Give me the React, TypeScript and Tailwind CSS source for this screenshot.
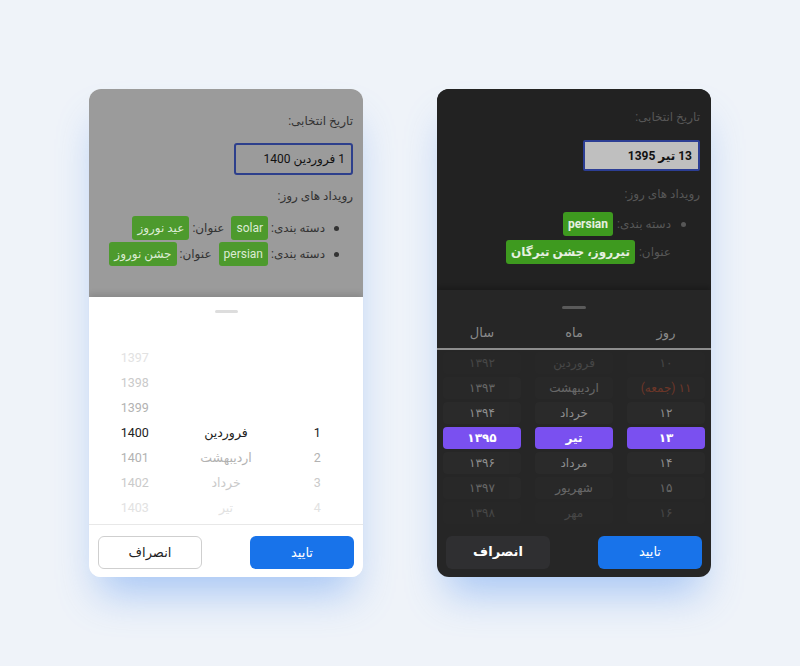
import type { ReactNode } from 'react';

const font = { fontFamily: 'Roboto, "DejaVu Sans", sans-serif' };

function Badge({ children, dark }: { children: ReactNode; dark?: boolean }) {
  return (
    <span
      className={
        'inline-flex h-[24px] items-center whitespace-nowrap rounded-[3px] px-[5px] text-[12px] ' +
        (dark ? 'bg-[#3e9a1f] font-bold text-[#e6f0e0]' : 'bg-[#4d9a2d] text-[#dcebd3]')
      }
    >
      {children}
    </span>
  );
}

const lightFade = ['text-[#e2e2e2]', 'text-[#cacaca]', 'text-[#b2b2b2]', 'text-[#222222]', 'text-[#b2b2b2]', 'text-[#cacaca]', 'text-[#e2e2e2]'];
const darkFade = ['opacity-25', 'opacity-50', 'opacity-80', '', 'opacity-80', 'opacity-50', 'opacity-25'];

function LightCard() {
  const years = ['1397', '1398', '1399', '1400', '1401', '1402', '1403'];
  const months = ['', '', '', 'فروردین', 'اردیبهشت', 'خرداد', 'تیر'];
  const days = ['', '', '', '1', '2', '3', '4'];
  return (
    <div dir="rtl" className="flex h-[488px] w-[274px] flex-col overflow-hidden rounded-[12px] bg-white shadow-[0_26px_40px_-10px_rgba(80,145,240,0.45)]">
      <div className="flex h-[208px] flex-col items-start bg-[#9b9b9b] px-[10px] pt-[24px] text-[12px] text-[#333333]">
        <div className="leading-[16px]">تاریخ انتخابی:</div>
        <div className="mt-[14px] flex h-[32px] w-[119px] items-center rounded-[3px] border-2 border-[#2d3f8c] px-[6px] text-[12px] text-[#111111]">
          1 فروردین 1400
        </div>
        <div className="mt-[13px] leading-[16px]">رویداد های روز:</div>
        <ul className="mt-[12px] flex flex-col gap-[2px] whitespace-nowrap pr-[14px]">
          <li className="flex items-center gap-[3px]">
            <span className="ml-[6px] h-[5px] w-[5px] rounded-full bg-[#333333]" />
            <span>دسته بندی:</span>
            <Badge>solar</Badge>
            <span className="mr-[4px]">عنوان:</span>
            <Badge>عید نوروز</Badge>
          </li>
          <li className="flex items-center gap-[3px]">
            <span className="ml-[6px] h-[5px] w-[5px] rounded-full bg-[#333333]" />
            <span>دسته بندی:</span>
            <Badge>persian</Badge>
            <span className="mr-[4px]">عنوان:</span>
            <Badge>جشن نوروز</Badge>
          </li>
        </ul>
      </div>
      <div className="flex flex-1 flex-col bg-white shadow-[0_-3px_6px_rgba(0,0,0,0.12)]">
        <div className="mx-auto mt-[13px] h-[3px] w-[23px] rounded-full bg-[#dddddd]" />
        <div className="mt-[33px] grid grid-cols-3 text-[12.5px]">
          {years.map((y, i) => (
            <div key={y} className={'contents ' + lightFade[i]}>
              <div className="flex h-[25px] items-center justify-center">{days[i]}</div>
              <div className="flex h-[25px] items-center justify-center">{months[i]}</div>
              <div className="flex h-[25px] items-center justify-center">{y}</div>
            </div>
          ))}
        </div>
        <div className="mt-[3px] border-t border-[#e8e8e8]" />
        <div className="flex flex-1 items-start justify-between px-[9px] pt-[11px]">
          <button className="h-[33px] w-[104px] rounded-[6px] bg-[#1873ea] text-[13px] text-white">تایید</button>
          <button className="h-[33px] w-[104px] rounded-[6px] border border-[#cfcfcf] bg-white text-[13px] text-[#222222]">انصراف</button>
        </div>
      </div>
    </div>
  );
}

function DarkCard() {
  const years = ['۱۳۹۲', '۱۳۹۳', '۱۳۹۴', '۱۳۹۵', '۱۳۹۶', '۱۳۹۷', '۱۳۹۸'];
  const months = ['فروردین', 'اردیبهشت', 'خرداد', 'تیر', 'مرداد', 'شهریور', 'مهر'];
  const days = ['۱۰', '۱۱ (جمعه)', '۱۲', '۱۳', '۱۴', '۱۵', '۱۶'];
  const cell = (text: string, i: number, red?: boolean) => (
    <div
      key={text}
      className={
        'flex h-[22px] items-center justify-center rounded-[4px] ' +
        (i === 3
          ? 'bg-[#7a50f0] font-bold text-white'
          : 'bg-[#2b2b2b] ' + (red ? 'text-[#b4472b] ' : 'text-[#a8a8a8] ') + darkFade[i])
      }
    >
      {text}
    </div>
  );
  return (
    <div dir="rtl" className="flex h-[488px] w-[274px] flex-col overflow-hidden rounded-[12px] bg-[#262626] shadow-[0_26px_40px_-10px_rgba(80,145,240,0.45)]">
      <div className="flex h-[201px] flex-col items-start bg-[#222222] px-[11px] pt-[20px] text-[12px] text-[#575757]">
        <div className="leading-[16px]">تاریخ انتخابی:</div>
        <div className="mt-[15px] flex h-[31px] w-[117px] items-center rounded-[2px] border-2 border-[#2c3e94] bg-[#bfbfbf] px-[6px] text-[12px] font-bold text-[#111111]">
          13 تیر 1395
        </div>
        <div className="mt-[15px] leading-[16px]">رویداد های روز:</div>
        <ul className="mt-[10px] flex flex-col gap-[4px] whitespace-nowrap pr-[14px]">
          <li className="flex items-center gap-[4px]">
            <span className="ml-[6px] h-[5px] w-[5px] rounded-full bg-[#575757]" />
            <span>دسته بندی:</span>
            <Badge dark>persian</Badge>
          </li>
          <li className="flex items-center gap-[4px] pr-[15px]">
            <span>عنوان:</span>
            <Badge dark>تیرروز، جشن تیرگان</Badge>
          </li>
        </ul>
      </div>
      <div className="flex flex-1 flex-col shadow-[0_-3px_6px_rgba(0,0,0,0.25)]">
        <div className="mx-auto mt-[16px] h-[3px] w-[24px] rounded-full bg-[#5a5a5a]" />
        <div className="mt-[14px] grid grid-cols-3 gap-x-[14px] px-[6px] text-[13px] text-[#8a8a8a]">
          <div className="text-center">روز</div>
          <div className="text-center">ماه</div>
          <div className="text-center">سال</div>
        </div>
        <div className="mt-[5px] h-[2px] bg-[#8d8d8d]" />
        <div className="mt-[2px] grid grid-cols-3 gap-x-[14px] gap-y-[3px] px-[6px] text-[12px]">
          {years.map((y, i) => [cell(days[i], i, i === 1), cell(months[i], i), cell(y, i)])}
        </div>
        <div className="flex flex-1 items-start justify-between px-[9px] pt-[12px]">
          <button className="h-[33px] w-[104px] rounded-[6px] bg-[#1873ea] text-[13px] text-white">تایید</button>
          <button className="h-[33px] w-[104px] rounded-[6px] bg-[#2f2f31] text-[13px] font-bold text-white">انصراف</button>
        </div>
      </div>
    </div>
  );
}

export default function App() {
  return (
    <div style={font} className="flex h-[666px] w-full justify-center gap-[74px] bg-[#eff3f9] pt-[89px]">
      <LightCard />
      <DarkCard />
    </div>
  );
}
